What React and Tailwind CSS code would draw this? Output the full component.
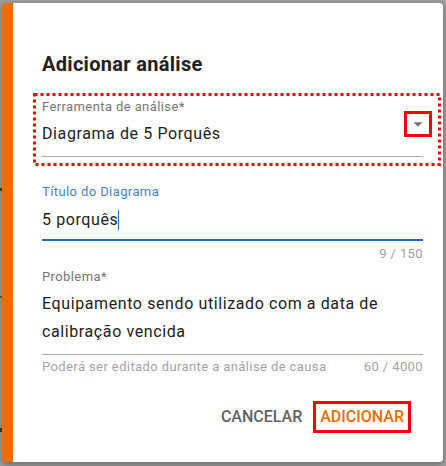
import { Fragment } from 'react'

const font = { fontFamily: 'Roboto, "Noto Sans", sans-serif' }

function DottedBox() {
  // square red dots annotation drawn around the select field
  return (
    <svg className="absolute left-[-9px] top-[-6px]" width="408" height="73" viewBox="0 0 408 73">
      <rect x="1.5" y="1.5" width="405" height="70" fill="none" stroke="#ff0000" strokeWidth="3" strokeDasharray="3 3" />
    </svg>
  )
}

function ArrowDrop() {
  return (
    <svg width="24" height="24" viewBox="0 0 24 24" className="text-[#757575]">
      <path d="M7 10l5 5 5-5z" fill="currentColor" />
    </svg>
  )
}

export default function App() {
  return (
    <div className="w-[446px] h-[466px] bg-[#9e9e9e] pl-[2px] pt-[3px] relative overflow-hidden" style={font}>
      <div className="absolute left-0 top-[188px] w-[2px] h-[3px] bg-[#333]" />
      <div className="absolute left-0 top-[296px] w-[2px] h-[2px] bg-[#555]" />
      <div className="absolute left-0 top-[428px] w-[2px] h-[4px] bg-[#333]" />

      <div className="w-[441px] h-[459px] bg-white rounded-[4px] border-l-[11px] border-[#ef6c00] pl-[29px] pr-[20px] pt-[45px] shadow-[0_2px_6px_rgba(0,0,0,0.35)] flex flex-col">
        <h2 className="text-[20px] leading-[32px] font-bold text-[#212121] tracking-[0.3px]">Adicionar análise</h2>

        <div className="relative mt-[19px]">
          <DottedBox />
          <div className="text-[13px] leading-[16px] text-[#757575] tracking-[0.4px]">Ferramenta de análise*</div>
          <div className="mt-[7px] text-[16px] leading-[24px] text-[#212121] tracking-[0.6px]">Diagrama de 5 Porquês</div>
          <div className="mt-[10px] h-px bg-[#a8a8a8]" />
          <div className="absolute left-[362px] top-[12px] w-[28px] h-[26px] border-[3px] border-[#ff0000] flex items-center justify-center">
            <ArrowDrop />
          </div>
        </div>

        <div className="mt-[27px]">
          <div className="text-[13px] leading-[16px] text-[#3a86d0] tracking-[0.4px]">Título do Diagrama</div>
          <div className="mt-[8px] text-[16px] leading-[24px] text-[#212121] tracking-[0.6px] flex items-center">
            5 porquês<span className="inline-block w-px h-[20px] bg-[#1f6fc0]" />
          </div>
          <div className="mt-[7px] h-[2px] bg-[#1a6dbf]" />
          <div className="mt-[5px] text-[13px] leading-[16px] text-[#9e9e9e] text-right tracking-[0.4px]">9 / 150</div>
        </div>

        <div className="mt-[7px]">
          <div className="text-[13px] leading-[16px] text-[#757575] tracking-[0.4px]">Problema*</div>
          <div className="mt-[5px] text-[16px] leading-[28px] text-[#212121] tracking-[0.6px]">
            Equipamento sendo utilizado com a data de
            <br />
            calibração vencida
          </div>
          <div className="mt-[8px] h-px bg-[#a8a8a8]" />
          <div className="mt-[4px] flex justify-between text-[13px] leading-[16px] text-[#a3a3a3] tracking-[0.4px]">
            <span>Poderá ser editado durante a análise de causa</span>
            <span>60 / 4000</span>
          </div>
        </div>

        <div className="mt-[26px] flex justify-end items-center pr-[12px]">
          <button className="text-[16px] leading-[26px] font-medium text-[#616161] uppercase">Cancelar</button>
          <button className="ml-[11px] h-[32px] border-[3px] border-[#ff0000] px-[4px] text-[16px] leading-[26px] font-medium text-[#ef6c00] uppercase">
            Adicionar
          </button>
        </div>
      </div>
    </div>
  )
}
